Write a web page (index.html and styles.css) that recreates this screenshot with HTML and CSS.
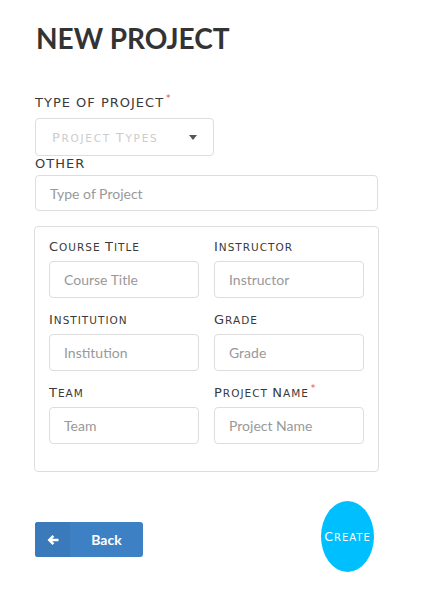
FILE: index.html
```html
<!DOCTYPE html>
<html>
<head>
<meta charset="utf-8">
<link rel="stylesheet" href="styles.css">
</head>
<body>
<div class="page">
  <h1 class="title">NEW PROJECT</h1>
  <label class="label label-caps">Type of project<span class="req">*</span></label>
  <div class="select">
    <span class="select-text"><span class="cap">P</span>roject <span class="cap">T</span>ypes</span>
    <span class="caret"></span>
  </div>
  <label class="label label-caps">Other</label>
  <input class="input input-wide" type="text" placeholder="Type of Project">
  <div class="box">
    <div class="field">
      <label class="label"><span class="cap">C</span>ourse <span class="cap">T</span>itle</label>
      <input class="input" type="text" placeholder="Course Title">
    </div>
    <div class="field">
      <label class="label"><span class="cap">I</span>nstructor</label>
      <input class="input" type="text" placeholder="Instructor">
    </div>
    <div class="field">
      <label class="label"><span class="cap">I</span>nstitution</label>
      <input class="input" type="text" placeholder="Institution">
    </div>
    <div class="field">
      <label class="label"><span class="cap">G</span>rade</label>
      <input class="input" type="text" placeholder="Grade">
    </div>
    <div class="field">
      <label class="label"><span class="cap">T</span>eam</label>
      <input class="input" type="text" placeholder="Team">
    </div>
    <div class="field">
      <label class="label"><span class="cap">P</span>roject <span class="cap">N</span>ame<span class="req">*</span></label>
      <input class="input" type="text" placeholder="Project Name">
    </div>
  </div>
  <div class="footer">
    <button class="back" type="button">
      <span class="back-icon">
        <svg width="12" height="12" viewBox="0 0 12 12"><path d="M0.5 6 L5.5 1 L7.3 2.8 L5.3 4.8 L11.5 4.8 L11.5 7.2 L5.3 7.2 L7.3 9.2 L5.5 11 Z" fill="#fff"/></svg>
      </span>
      <span class="back-text">Back</span>
    </button>
    <button class="create" type="button"><span class="cap">C</span>reate</button>
  </div>
</div>
</body>
</html>
```

FILE: styles.css
```css
html, body {
  margin: 0;
  padding: 0;
  background: #fff;
}
.page {
  width: 343px;
  padding: 20px 0 0 35px;
  display: flex;
  flex-direction: column;
  align-items: flex-start;
  font-family: Lato, "Liberation Sans", sans-serif;
}
.title {
  margin: 0 0 39px 1px;
  font-family: Lato, sans-serif;
  font-weight: 700;
  font-size: 28px;
  line-height: 36px;
  color: #333;
}
.label {
  display: block;
  font-family: "DejaVu Sans", sans-serif;
  font-size: 10.5px;
  line-height: 16px;
  color: #3a3a3a;
  letter-spacing: 1px;
  text-transform: uppercase;
  white-space: nowrap;
}
.label-caps {
  font-size: 13px;
}
.cap {
  font-size: 13px;
}
.req {
  color: #d9534f;
  font-size: 9px;
  line-height: 0;
  vertical-align: 6px;
  margin-left: 2px;
}
.select {
  margin-top: 7px;
  width: 179px;
  height: 38px;
  box-sizing: border-box;
  border: 1px solid #ddd;
  border-radius: 4px;
  display: flex;
  align-items: center;
  justify-content: space-between;
  padding: 0 16px 0 16px;
}
.select-text {
  font-family: "DejaVu Sans", sans-serif;
  font-size: 10.5px;
  text-transform: uppercase;
  color: #ccc;
  letter-spacing: 1.7px;
  white-space: nowrap;
}
.caret {
  width: 0;
  height: 0;
  border-left: 4px solid transparent;
  border-right: 4px solid transparent;
  border-top: 5px solid #555;
}
.input {
  display: block;
  box-sizing: border-box;
  width: 100%;
  height: 37px;
  margin: 6px 0 0;
  padding: 0 14px;
  border: 1px solid #ddd;
  border-radius: 4px;
  font-family: Lato, sans-serif;
  font-size: 14px;
  color: #333;
  outline: none;
}
.input::placeholder {
  color: #999;
}
.input-wide {
  width: 343px;
  height: 36px;
  margin-top: 3px;
}
.box {
  margin-top: 15px;
  width: 345px;
  margin-left: -1px;
  box-sizing: border-box;
  border: 1px solid #ddd;
  border-radius: 4px;
  padding: 12px 14px 27px 14px;
  display: grid;
  grid-template-columns: 1fr 1fr;
  column-gap: 15px;
  row-gap: 14px;
}
.footer {
  margin-top: 29px;
  width: 339px;
  display: flex;
  justify-content: space-between;
  align-items: flex-start;
}
.back {
  margin-top: 21px;
  width: 108px;
  height: 35px;
  padding: 0;
  border: none;
  border-radius: 3px;
  background: #3d80c3;
  display: flex;
  align-items: stretch;
  overflow: hidden;
  cursor: pointer;
}
.back-icon {
  width: 35px;
  background: #3a7aba;
  display: flex;
  align-items: center;
  justify-content: center;
}
.back-text {
  flex: 1;
  display: flex;
  align-items: center;
  justify-content: center;
  font-family: Lato, sans-serif;
  font-weight: 700;
  font-size: 14px;
  color: #fff;
}
.create {
  width: 53px;
  height: 71px;
  padding: 0;
  border: none;
  border-radius: 50%;
  background: #00bfff;
  color: #fff;
  font-family: "DejaVu Sans", sans-serif;
  font-size: 10px;
  text-transform: uppercase;
  letter-spacing: 1px;
  white-space: nowrap;
  cursor: pointer;
}
.create .cap {
  font-size: 12.5px;
}
```
